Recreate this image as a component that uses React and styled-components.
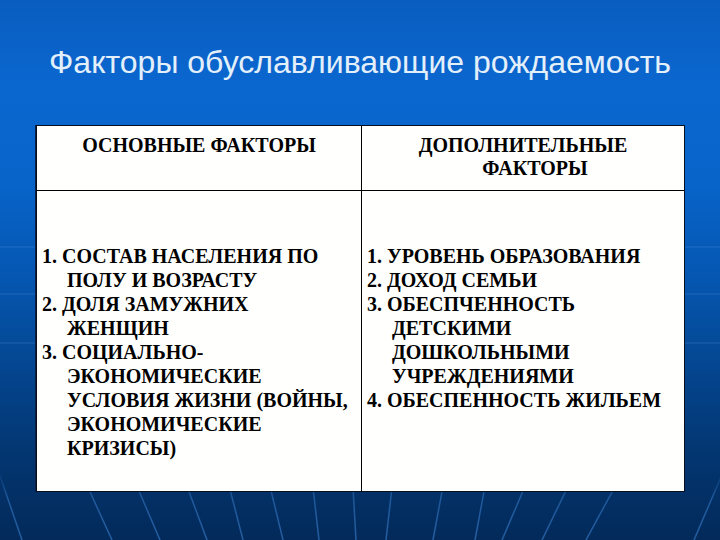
import styled, { createGlobalStyle } from "styled-components";

const GlobalStyle = createGlobalStyle`
  html, body {
    margin: 0;
    padding: 0;
    background: #032a5a;
  }
`;

const mainFactors = [
  ["1. СОСТАВ НАСЕЛЕНИЯ ПО", "ПОЛУ И ВОЗРАСТУ"],
  ["2. ДОЛЯ ЗАМУЖНИХ", "ЖЕНЩИН"],
  [
    "3. СОЦИАЛЬНО-",
    "ЭКОНОМИЧЕСКИЕ",
    "УСЛОВИЯ ЖИЗНИ (ВОЙНЫ,",
    "ЭКОНОМИЧЕСКИЕ",
    "КРИЗИСЫ)",
  ],
];

const extraFactors = [
  ["1. УРОВЕНЬ ОБРАЗОВАНИЯ"],
  ["2. ДОХОД СЕМЬИ"],
  ["3. ОБЕСПЧЕННОСТЬ", "ДЕТСКИМИ", "ДОШКОЛЬНЫМИ", "УЧРЕЖДЕНИЯМИ"],
  ["4. ОБЕСПЕННОСТЬ ЖИЛЬЕМ"],
];

// floor lines: [x at y=470, x at y=540]
const rays = [
  [-2, 22],
  [80, 112],
  [130, 160],
  [181, 207],
  [225, 243],
  [266, 283],
  [311, 319],
  [352, 356],
  [394, 386],
  [446, 433],
  [488, 475],
  [532, 502],
  [576, 542],
  [624, 586],
  [724, 694],
];

function Backdrop() {
  return (
    <Decor viewBox="0 0 720 540" preserveAspectRatio="none">
      <defs>
        <linearGradient id="rayFade" x1="0" y1="470" x2="0" y2="540" gradientUnits="userSpaceOnUse">
          <stop offset="0" stopColor="#3a80d0" stopOpacity="0" />
          <stop offset="0.4" stopColor="#3a80d0" stopOpacity="0.5" />
          <stop offset="1" stopColor="#3a80d0" stopOpacity="0.6" />
        </linearGradient>
      </defs>
      {[247, 294, 343].map((y) => (
        <line key={y} x1="0" y1={y} x2="720" y2={y} stroke="#5f9ce0" strokeOpacity="0.3" strokeWidth="1" />
      ))}
      {rays.map(([a, b], i) => (
        <line key={i} x1={a} y1="470" x2={b} y2="540" stroke="url(#rayFade)" strokeWidth="1.5" />
      ))}
    </Decor>
  );
}

function FactorList({ items }) {
  return items.map((lines, i) => (
    <div key={i}>
      {lines.map((text, j) => (
        <Line key={j} $indent={j > 0}>
          {text}
        </Line>
      ))}
    </div>
  ));
}

export default function App() {
  return (
    <>
      <GlobalStyle />
      <Slide>
        <Backdrop />
        <Content>
          <Title>Факторы обуславливающие рождаемость</Title>
          <Table>
            <HeadCell $divider>
              <Line>ОСНОВНЫЕ ФАКТОРЫ</Line>
            </HeadCell>
            <HeadCell>
              <Line>ДОПОЛНИТЕЛЬНЫЕ</Line>
              <Line $shift>ФАКТОРЫ</Line>
            </HeadCell>
            <BodyCell $divider>
              <FactorList items={mainFactors} />
            </BodyCell>
            <BodyCell $pad={5}>
              <FactorList items={extraFactors} />
            </BodyCell>
          </Table>
        </Content>
      </Slide>
    </>
  );
}

const Slide = styled.div`
  position: relative;
  width: 720px;
  height: 540px;
  overflow: hidden;
  background: linear-gradient(
    180deg,
    #0a5dc0 0%,
    #0a67cf 16%,
    #0864c9 34%,
    #0556b0 52%,
    #044690 68%,
    #033671 84%,
    #032a5a 100%
  );
`;

const Decor = styled.svg`
  position: absolute;
  inset: 0;
  width: 720px;
  height: 540px;
`;

const Content = styled.div`
  position: relative;
  display: flex;
  flex-direction: column;
  padding-top: 42px;
`;

const Title = styled.h1`
  margin: 0;
  height: 40px;
  font-family: "Liberation Sans", Arial, sans-serif;
  font-weight: normal;
  font-size: 32px;
  line-height: 40px;
  text-align: center;
  color: #e3f0fb;
`;

const Table = styled.div`
  box-sizing: border-box;
  margin: 43px 0 0 36px;
  width: 649px;
  height: 367px;
  display: grid;
  grid-template-columns: 325px 1fr;
  grid-template-rows: 65px 1fr;
  background: #fffffd;
  border: 1px solid #0a0f1e;
  box-shadow: -1px 0 0 #0b1f45;
  color: #000;
`;

const HeadCell = styled.div`
  box-sizing: border-box;
  padding-top: 8px;
  text-align: center;
  line-height: 23px;
  border-bottom: 1px solid #000;
  border-right: ${(p) => (p.$divider ? "1px solid #000" : "none")};
`;

const BodyCell = styled.div`
  box-sizing: border-box;
  padding: 53px 0 0 ${(p) => p.$pad ?? 5}px;
  line-height: 24px;
  border-right: ${(p) => (p.$divider ? "1px solid #000" : "none")};
`;

const Line = styled.div`
  font-family: "Liberation Serif", "Times New Roman", "DejaVu Serif", serif;
  font-weight: 700;
  font-size: 20px;
  white-space: nowrap;
  padding-left: ${(p) => (p.$indent ? 25 : p.$shift ? 24 : 0)}px;
`;
